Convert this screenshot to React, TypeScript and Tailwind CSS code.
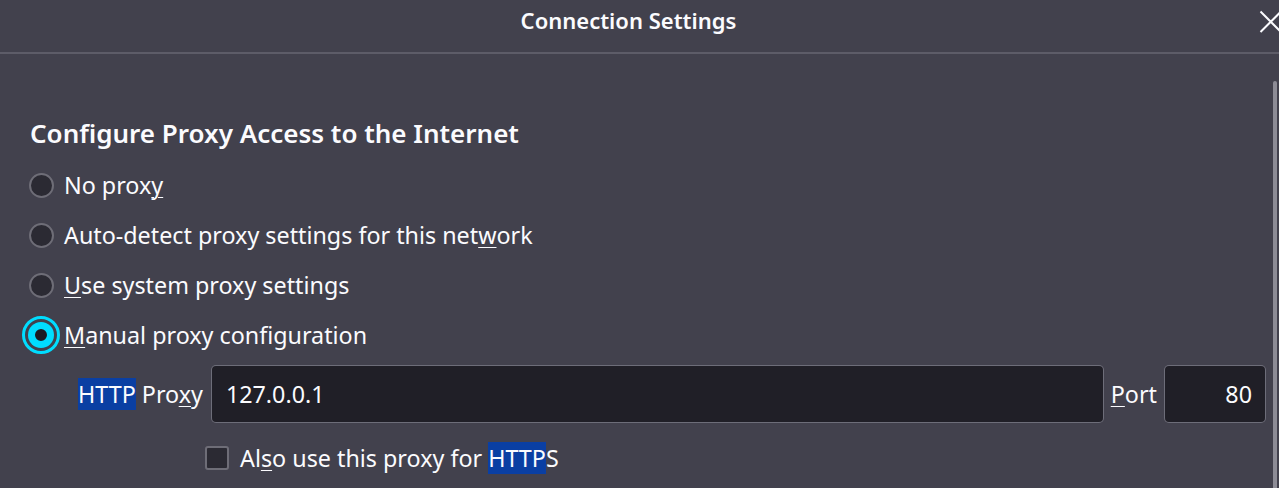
import React from "react";

const font = { fontFamily: '"Noto Sans", "Open Sans", sans-serif' };

function Radio({ checked }: { checked?: boolean }) {
  if (checked) {
    return (
      <span className="flex h-[38px] w-[38px] items-center justify-center rounded-full border-[3px] border-[#00ddff]">
        <span className="flex h-[26px] w-[26px] items-center justify-center rounded-full bg-[#00ddff]">
          <span className="h-[20px] w-[20px] rounded-full border-[4px] border-[#00ddff] bg-[#1c1b22]" />
        </span>
      </span>
    );
  }
  return (
    <span className="flex h-[38px] w-[38px] items-center justify-center">
      <span className="h-[25px] w-[25px] rounded-full border-2 border-[#6e6d77] bg-[#2b2a33]" />
    </span>
  );
}

function U({ children }: { children: React.ReactNode }) {
  return <span className="underline decoration-1 underline-offset-[3px]">{children}</span>;
}

function Hl({ children }: { children: React.ReactNode }) {
  return <span className="bg-[#0a3fa3]">{children}</span>;
}

export default function App() {
  return (
    <div className="h-[488px] w-[1279px] overflow-hidden bg-[#42414d] text-[#fbfbfe]" style={font}>
      <div className="relative flex h-[54px] items-start justify-center border-b-2 border-[#5d5c68] pr-[22px] pt-[4px]">
        <span className="text-[22px] font-semibold leading-[32px]">Connection Settings</span>
        <svg className="absolute left-[1259px] top-[10px]" width="24" height="24" viewBox="0 0 24 24">
          <path d="M1.5 1.5 L22 22 M22 1.5 L1.5 22" stroke="#fbfbfe" strokeWidth="2" />
        </svg>
      </div>
      <div className="flex">
        <div className="flex-1 pl-[22px] pr-[7px]">
          <div className="pl-[8px] pt-[62px] text-[26px] font-semibold leading-[34px]">
            Configure Proxy Access to the Internet
          </div>
          <div className="mt-[10px] flex flex-col text-[23.3px]">
            <label className="flex h-[50px] items-center gap-[4px]">
              <Radio />
              <span>No prox<U>y</U></span>
            </label>
            <label className="flex h-[50px] items-center gap-[4px]">
              <Radio />
              <span>Auto-detect proxy settings for this net<U>w</U>ork</span>
            </label>
            <label className="flex h-[50px] items-center gap-[4px]">
              <Radio />
              <span><U>U</U>se system proxy settings</span>
            </label>
            <label className="flex h-[50px] items-center gap-[4px]">
              <Radio checked />
              <span><U>M</U>anual proxy configuration</span>
            </label>
            <div className="mt-[5px] flex h-[58px] items-center pl-[56px]">
              <span className="mr-[8px] whitespace-nowrap"><Hl>HTTP</Hl> Pro<U>x</U>y</span>
              <div className="flex h-[58px] flex-1 items-center rounded-[5px] border border-[#8f8f9d]/70 bg-[#201f27] px-[14px]">
                127.0.0.1
              </div>
              <span className="mx-[7px]"><U>P</U>ort</span>
              <div className="flex h-[58px] w-[102px] items-center justify-end rounded-[5px] border border-[#8f8f9d]/70 bg-[#201f27] px-[13px]">
                80
              </div>
            </div>
            <label className="mt-[12px] flex h-[46px] items-center gap-[11px] pl-[183px]">
              <span className="h-[24px] w-[24px] rounded-[3px] border-2 border-[#6e6d77] bg-[#2b2a33]" />
              <span>Al<U>s</U>o use this proxy for <Hl>HTTP</Hl>S</span>
            </label>
          </div>
        </div>
        <div className="w-[6px] pt-[27px]">
          <div className="h-[420px] w-[4px] rounded-full bg-[#8d8c96]" />
        </div>
      </div>
    </div>
  );
}
